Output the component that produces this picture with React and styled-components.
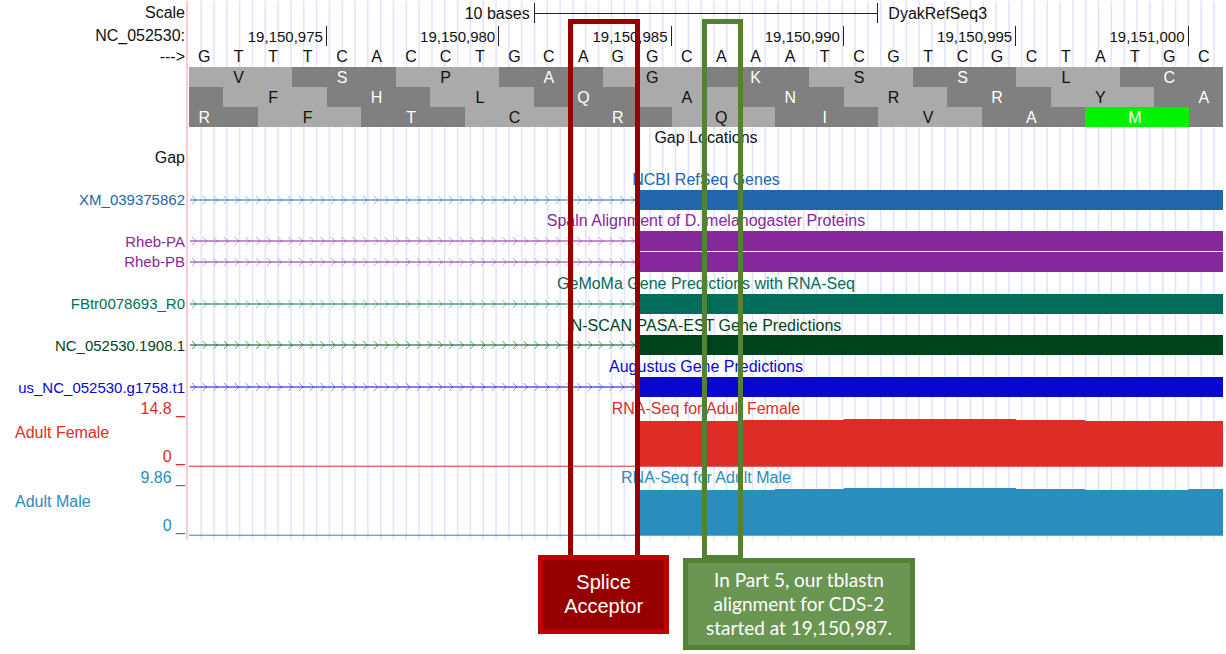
import React from 'react'
import styled, { createGlobalStyle } from 'styled-components'

const GlobalStyle = createGlobalStyle`
    body {
        margin: 0;
        background: #fff;
        color: #111;
        font-family: "Liberation Sans", Arial, sans-serif;
        font-size: 16px;
        line-height: 20px;
    }
`

const StyledPage = styled.main`
    position: relative;
    padding: 0 3px 114px 0;
`

const StyledBrowser = styled.section`
    position: relative;
    padding-bottom: 4px;
`

const StyledSection = styled.div`
    position: relative;
`

const StyledRow = styled.div`
    display: grid;
    grid-template-columns: 174px minmax(0, 1fr);
    padding-left: 15px;
    height: ${props => props.$height ? `${props.$height}px` : 'auto'};
    color: ${props => props.$color || 'inherit'};
`

const StyledLabel = styled.div`
    display: flex;
    justify-content: flex-end;
    align-items: center;
    padding-right: 4px;
    font-size: ${props => props.$small ? 15 : 16}px;
    white-space: nowrap;
`

const StyledPlotBackground = styled.div`
    position: absolute;
    top: 1px;
    bottom: 0;
    left: 186px;
    right: 0;
    border-left: 2px solid #ffcccc;
    padding-left: 1px;
`

const StyledGuides = styled.svg`
    display: block;
    width: 100%;
    height: 100%;
`

const StyledBases = styled.div`
    display: grid;
    grid-template-columns: repeat(30, minmax(0, 1fr));
    align-items: center;
    min-width: 0;
`

const StyledScaleText = styled.span`
    grid-column: span 10;
    height: 20px;
    padding: 0 4px 0 10px;
    line-height: 22px;
    text-align: ${props => props.$align};
`

const StyledScaleBar = styled.div`
    grid-column: span 10;
    height: 20px;
    border: solid #222;
    border-width: 0 1px;
    background: linear-gradient(#222, #222) center / 100% 1px no-repeat;
`

const StyledTick = styled.span`
    grid-column: span ${props => props.$span};
    box-sizing: border-box;
    height: 20px;
    border-right: 1px solid #222;
    padding-right: 3px;
    font-size: 15px;
    line-height: 22px;
    text-align: right;
`

const StyledBase = styled.span`
    padding-right: 4px;
    text-align: center;
`

const aminoFill = { light: '#aaaaaa', dark: '#808080', start: '#00f200' }

const StyledAmino = styled.span`
    grid-column: span ${props => props.$span};
    box-sizing: border-box;
    height: 20px;
    padding-right: 4px;
    line-height: 22px;
    text-align: center;
    background: ${props => aminoFill[props.$kind]};
    color: ${props => props.$kind === 'light' ? '#111' : '#fff'};
`

// every track line shares the height equally
const StyledTracks = styled.div`
    position: relative;
    display: grid;
    grid-auto-rows: 1fr;
    min-height: 271px;
`

const StyledTitle = styled.h2`
    height: 20px;
    margin: 0;
    font-size: 16px;
    font-weight: 400;
    line-height: 22px;
    text-align: center;
    white-space: nowrap;
`

const StyledGene = styled.div`
    display: grid;
    grid-template-columns: 13fr 17fr;
    align-items: start;
    min-width: 0;
`

const StyledIntron = styled.svg`
    display: block;
    width: 100%;
    height: 20px;
`

const StyledExon = styled.div`
    height: 20px;
    background: ${props => props.$color};
`

const StyledWiggleLabel = styled.div`
    display: flex;
    justify-content: space-between;
    align-items: center;
    padding-right: 4px;
`

const StyledRange = styled.div`
    display: flex;
    flex-direction: column;
    justify-content: space-between;
    align-self: stretch;
    padding-top: 1px;
    text-align: right;
`

const StyledWiggle = styled.div`
    position: relative;
    min-width: 0;
`

const StyledSignal = styled.svg`
    position: absolute;
    inset: 0;
    width: 100%;
    height: 100%;
`

const StyledAnnotations = styled.div`
    position: absolute;
    top: 19px;
    left: 189px;
    right: 3px;
    display: grid;
    grid-template-columns: repeat(30, minmax(0, 1fr));
`

const StyledMarker = styled.div`
    position: relative;
    grid-row: 1;
    grid-column: ${props => props.$from} / ${props => props.$to};
    box-sizing: border-box;
    height: 541px;
    margin-left: -${props => props.$lead}px;
    margin-right: -3px;
    border: 5px solid ${props => props.$color};
`

const StyledCallout = styled.p`
    position: absolute;
    top: ${props => props.$top}px;
    left: -${props => props.$shift}px;
    margin: 0;
    padding: ${props => props.$padding};
    border: 5px solid ${props => props.$border};
    background: ${props => props.$fill};
    color: #fff;
    font-family: ${props => props.$font || 'inherit'};
    font-size: ${props => props.$size}px;
    line-height: 24px;
    text-align: center;
    white-space: nowrap;
`

const bases = 'GTTTCACCTGCAGGCAAATCGTCGCTATGC'.split('')

const ticks = [
    { label: '19,150,975', span: 4 },
    { label: '19,150,980', span: 5 },
    { label: '19,150,985', span: 5 },
    { label: '19,150,990', span: 5 },
    { label: '19,150,995', span: 5 },
    { label: '19,151,000', span: 5 },
]

// [letter, bases covered, shade]
const frames = [
    [
        ['V', 3, 'light'], ['S', 3, 'dark'], ['P', 3, 'light'], ['A', 3, 'dark'], ['G', 3, 'light'],
        ['K', 3, 'dark'], ['S', 3, 'light'], ['S', 3, 'dark'], ['L', 3, 'light'], ['C', 3, 'dark'],
    ],
    [
        ['', 1, 'dark'], ['F', 3, 'light'], ['H', 3, 'dark'], ['L', 3, 'light'], ['Q', 3, 'dark'],
        ['A', 3, 'light'], ['N', 3, 'dark'], ['R', 3, 'light'], ['R', 3, 'dark'], ['Y', 3, 'light'],
        ['', 1, 'dark'], ['A', 1, 'dark'],
    ],
    [
        ['R', 1, 'dark'], ['', 1, 'dark'], ['F', 3, 'light'], ['T', 3, 'dark'], ['C', 3, 'light'], ['R', 3, 'dark'],
        ['Q', 3, 'light'], ['I', 3, 'dark'], ['V', 3, 'light'], ['A', 3, 'dark'], ['M', 3, 'start'], ['', 1, 'dark'],
    ],
]

const tracks = [
    { title: 'NCBI RefSeq Genes', color: '#2166ac', arrow: '#8ab8e0', items: ['XM_039375862'] },
    { title: 'Spaln Alignment of D. melanogaster Proteins', color: '#86279b', arrow: '#cf9cdb', items: ['Rheb-PA', 'Rheb-PB'] },
    { title: 'GeMoMa Gene Predictions with RNA-Seq', color: '#016c59', arrow: '#86c2b5', items: ['FBtr0078693_R0'] },
    { title: 'N-SCAN PASA-EST Gene Predictions', color: '#00441b', arrow: '#4fae5c', items: ['NC_052530.1908.1'] },
    { title: 'Augustus Gene Predictions', color: '#0808d0', arrow: '#9090ee', items: ['us_NC_052530.g1758.t1'] },
]

// steps are [first base, top of the signal]
const wiggles = [
    {
        name: 'Adult Female', title: 'RNA-Seq for Adult Female', max: '14.8', color: '#de2d26',
        steps: [[13, 23], [16, 22], [19, 21], [24, 22], [26, 23]],
    },
    {
        name: 'Adult Male', title: 'RNA-Seq for Adult Male', max: '9.86', color: '#2b8cbe',
        steps: [[13, 23], [17, 22], [19, 21], [24, 22], [26, 23], [29, 22]],
    },
]

const Guides = () => (
    <StyledGuides aria-hidden="true">
        {Array.from({ length: 80 }, (_, i) => {
            const x = `${(12.2 + i * 12.82) / 10.34}%`
            return <line key={i} x1={x} x2={x} y1="0" y2="100%" stroke="#e2e2ff" strokeWidth="1.5" />
        })}
    </StyledGuides>
)

const Intron = ({ color, arrow }) => (
    <StyledIntron aria-hidden="true">
        {Array.from({ length: 42 }, (_, i) => {
            const x = 7 + i * 10.7
            return <path key={i} d={`M${x - 4} 6 L${x} 10 L${x - 4} 14`} fill="none" stroke={arrow} />
        })}
        <line x1="1" x2="100%" y1="10" y2="10" stroke={color} strokeWidth="1.2" />
    </StyledIntron>
)

const Header = () => (
    <StyledSection>
        <StyledRow $height={26}>
            <StyledLabel>Scale</StyledLabel>
            <StyledBases>
                <StyledScaleText $align="right">10 bases</StyledScaleText>
                <StyledScaleBar />
                <StyledScaleText $align="left">DyakRefSeq3</StyledScaleText>
            </StyledBases>
        </StyledRow>
        <StyledRow $height={20}>
            <StyledLabel>NC_052530:</StyledLabel>
            <StyledBases>
                {ticks.map(tick => <StyledTick key={tick.label} $span={tick.span}>{tick.label}</StyledTick>)}
            </StyledBases>
        </StyledRow>
        <StyledRow $height={21}>
            <StyledLabel>---&gt;</StyledLabel>
            <StyledBases>
                {bases.map((base, i) => <StyledBase key={i}>{base}</StyledBase>)}
            </StyledBases>
        </StyledRow>
        {frames.map((frame, i) => (
            <StyledRow key={i} $height={20}>
                <StyledLabel />
                <StyledBases>
                    {frame.map(([letter, span, kind], j) => (
                        <StyledAmino key={j} $span={span} $kind={kind}>{letter}</StyledAmino>
                    ))}
                </StyledBases>
            </StyledRow>
        ))}
    </StyledSection>
)

const Track = ({ track }) => (
    <>
        <StyledRow $color={track.color}>
            <StyledLabel />
            <StyledTitle>{track.title}</StyledTitle>
        </StyledRow>
        {track.items.map(item => (
            <StyledRow key={item} $color={track.color}>
                <StyledLabel $small>{item}</StyledLabel>
                <StyledGene>
                    <Intron color={track.color} arrow={track.arrow} />
                    <StyledExon $color={track.color} />
                </StyledGene>
            </StyledRow>
        ))}
    </>
)

const Wiggle = ({ wiggle }) => {
    const outline = wiggle.steps.map(([from, top], i) => {
        const to = wiggle.steps[i + 1] ? wiggle.steps[i + 1][0] : 30
        return `L${from} ${top} L${to} ${top}`
    }).join(' ')

    return (
        <StyledRow $height={69} $color={wiggle.color}>
            <StyledWiggleLabel>
                <span>{wiggle.name}</span>
                <StyledRange>
                    <span>{wiggle.max} _</span>
                    <span>0 _</span>
                </StyledRange>
            </StyledWiggleLabel>
            <StyledWiggle>
                <StyledSignal viewBox="0 0 30 69" preserveAspectRatio="none" aria-hidden="true">
                    <rect x="0" y="67.7" width="13" height="1" fill={wiggle.color} />
                    <path d={`M13 68.7 ${outline} L30 68.7 Z`} fill={wiggle.color} />
                </StyledSignal>
                <StyledTitle>{wiggle.title}</StyledTitle>
            </StyledWiggle>
        </StyledRow>
    )
}

const GenomeBrowser = () => (
    <>
        <GlobalStyle />
        <StyledPage>
            <StyledBrowser>
                <StyledPlotBackground>
                    <Guides />
                </StyledPlotBackground>
                <Header />
                <StyledTracks>
                    <StyledRow>
                        <StyledLabel />
                        <StyledTitle>Gap Locations</StyledTitle>
                    </StyledRow>
                    <StyledRow>
                        <StyledLabel>Gap</StyledLabel>
                    </StyledRow>
                    {tracks.map(track => <Track key={track.title} track={track} />)}
                </StyledTracks>
                <StyledSection>
                    {wiggles.map(wiggle => <Wiggle key={wiggle.name} wiggle={wiggle} />)}
                </StyledSection>
            </StyledBrowser>
            <StyledAnnotations>
                <StyledMarker $from={12} $to={14} $lead={0} $color="#960000">
                    <StyledCallout $top={531} $shift={35} $padding="10px 21px 11px" $size={20} $border="#c00000" $fill="#960000">
                        Splice<br />Acceptor
                    </StyledCallout>
                </StyledMarker>
                <StyledMarker $from={16} $to={17} $lead={4} $color="#548235">
                    <StyledCallout $top={534} $shift={24} $padding="5px 18px" $size={19} $font="Lato, sans-serif" $border="#548235" $fill="#6b9553">
                        In Part 5, our tblastn<br />alignment for CDS-2<br />started at 19,150,987.
                    </StyledCallout>
                </StyledMarker>
            </StyledAnnotations>
        </StyledPage>
    </>
)

export default GenomeBrowser
